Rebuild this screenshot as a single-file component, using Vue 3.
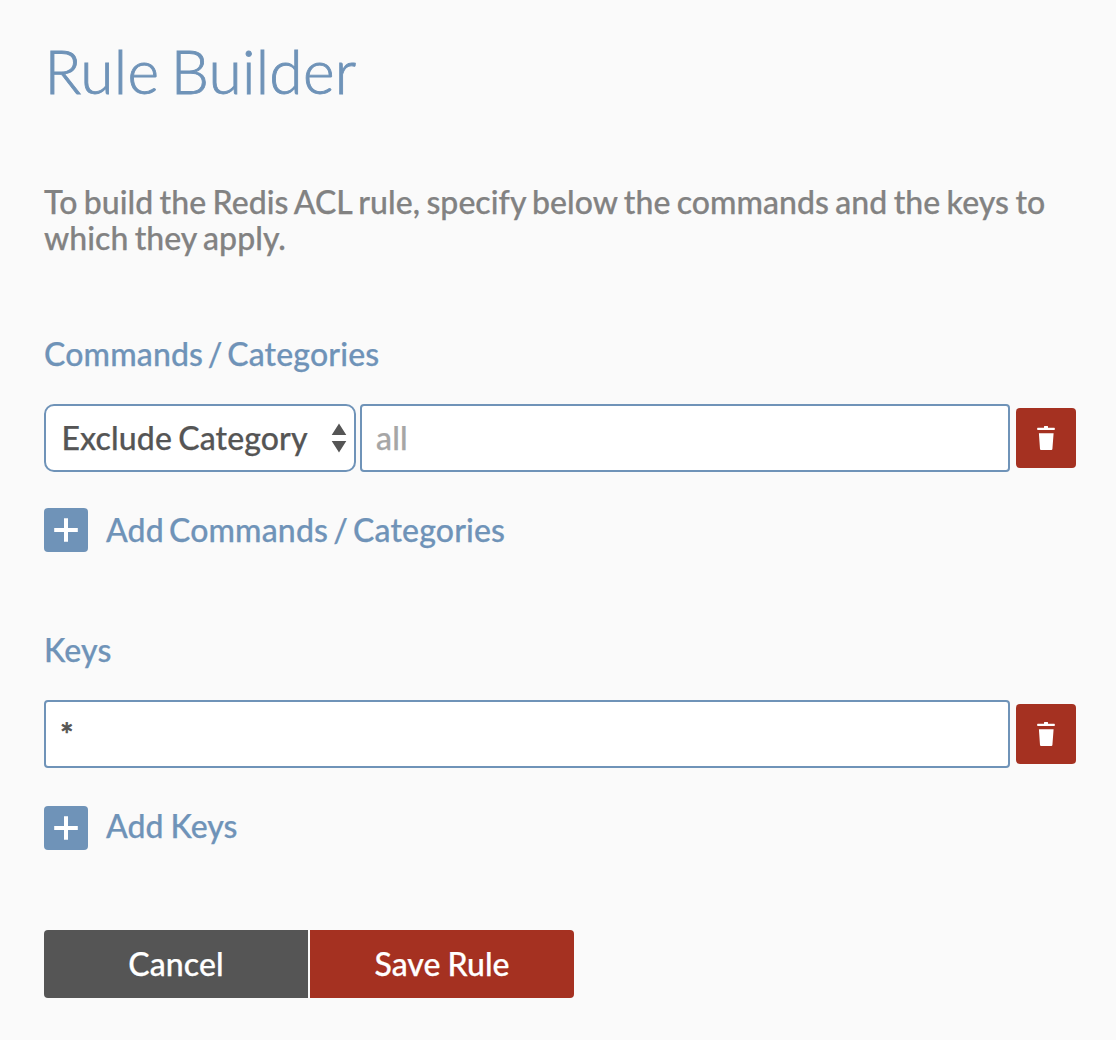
<script setup>
import { ref } from 'vue'
const category = ref('')
const keys = ref('*')
</script>

<template>
  <main class="page">
    <h1>Rule Builder</h1>
    <p class="intro">To build the Redis ACL rule, specify below the commands and the keys to which they apply.</p>

    <h2>Commands / Categories</h2>
    <div class="row commands">
      <button class="select" type="button">
        <span>Exclude Category</span>
        <svg width="16" height="30" viewBox="0 0 16 30"><path d="M8 .5L15.3 12H.7zM8 29.5L15.3 18H.7z" fill="#555" /></svg>
      </button>
      <input v-model="category" class="field" placeholder="all" />
      <button class="trash" type="button" aria-label="Delete">
        <svg width="20" height="26" viewBox="0 0 20 26" fill="#fff"><path d="M1.8 2.8H8V1.5q0-.5.5-.5h3q.5 0 .5.5v1.3h6.200q.7 0 .7 1.100t-.7 1.100H1.800q-.7 0-.7-1.100t.7-1.100zM2.900 8.200h14.700L16.400 24q-.1 1-1 1H5q-.9 0-1-1z" /></svg>
      </button>
    </div>
    <div class="add">
      <button class="plus" type="button" aria-label="Add"><svg width="24" height="24" viewBox="0 0 24 24"><path d="M12 .2v23.600M.2 12h23.600" stroke="#fff" stroke-width="4" /></svg></button>
      <span>Add Commands / Categories</span>
    </div>

    <h2 class="keys-title">Keys</h2>
    <div class="row">
      <input v-model="keys" class="field star" />
      <button class="trash" type="button" aria-label="Delete">
        <svg width="20" height="26" viewBox="0 0 20 26" fill="#fff"><path d="M1.8 2.8H8V1.5q0-.5.5-.5h3q.5 0 .5.5v1.3h6.200q.7 0 .7 1.100t-.7 1.100H1.800q-.7 0-.7-1.100t.7-1.100zM2.900 8.200h14.700L16.400 24q-.1 1-1 1H5q-.9 0-1-1z" /></svg>
      </button>
    </div>
    <div class="add add-keys">
      <button class="plus" type="button" aria-label="Add"><svg width="24" height="24" viewBox="0 0 24 24"><path d="M12 .2v23.600M.2 12h23.600" stroke="#fff" stroke-width="4" /></svg></button>
      <span>Add Keys</span>
    </div>

    <div class="actions">
      <button class="cancel" type="button">Cancel</button>
      <button class="save" type="button">Save Rule</button>
    </div>
  </main>
</template>

<style>
body { background: #fafafa; }
</style>

<style scoped>
* { box-sizing: border-box; }
.page {
  height: 1040px;
  padding: 34px 40px 0 44px;
  overflow: hidden;
  background: #fafafa;
  color: #6f93b8;
  font: 500 32px/36px Lato, sans-serif;
  -webkit-text-stroke: 0.25px currentColor;
}
h1 {
  margin: 0; height: 150px; font-weight: 300; font-size: 60.5px; line-height: 74px;
  word-spacing: -5.3px; letter-spacing: 0.28px; text-indent: 0.5px;
  -webkit-text-stroke-width: 0.9px;
}
.intro { margin: 0; height: 152px; color: #828282; word-spacing: -1.75px; letter-spacing: 0.04px; }
h2 { margin: 0; height: 68px; font-weight: 500; font-size: 32px; line-height: 36px; word-spacing: -3.6px; letter-spacing: 0.16px; }
button, input { font: inherit; margin: 0; padding: 0; border: 0; }
.row { display: flex; align-items: center; height: 68px; }
.select {
  display: flex; align-items: center; justify-content: space-between;
  width: 312px; height: 68px; margin-right: 4px; padding: 0 7px 0 15.5px;
  border: 2px solid #6f93b8; border-radius: 10px; background: #fff; color: #555;
  word-spacing: -2px; letter-spacing: 0.12px;
}
.field {
  flex: 1; min-width: 0; height: 68px; padding: 0 14px 2px;
  border: 2px solid #6f93b8; border-radius: 4px; background: #fff; color: #555; outline: 0;
}
.field.star { padding-bottom: 0; -webkit-text-stroke-width: 0.7px; }
.field::placeholder { color: #a6a6a6; opacity: 1; letter-spacing: 0.2px; }
.trash {
  display: flex; align-items: center; justify-content: center;
  width: 60px; height: 60px; margin-left: 6px; border-radius: 4px; background: #a53121;
}
.add { display: flex; align-items: center; height: 44px; margin-top: 36px; gap: 18px; word-spacing: -3.1px; letter-spacing: 0.15px; }
.plus { display: flex; align-items: center; justify-content: center; width: 44px; height: 44px; border-radius: 4px; background: #6f93b8; }
.keys-title { margin-top: 80px; }
.add-keys { margin-top: 38px; word-spacing: -1px; letter-spacing: 0; }
.add-keys span { padding-bottom: 4px; }
.actions { display: flex; gap: 2px; margin-top: 80px; }
.actions button { width: 264px; height: 68px; color: #fff; }
.actions .cancel { background: #555; border-radius: 4px 0 0 4px; letter-spacing: 0.1px; }
.actions .save { background: #a53121; border-radius: 0 4px 4px 0; word-spacing: -1px; }
</style>
